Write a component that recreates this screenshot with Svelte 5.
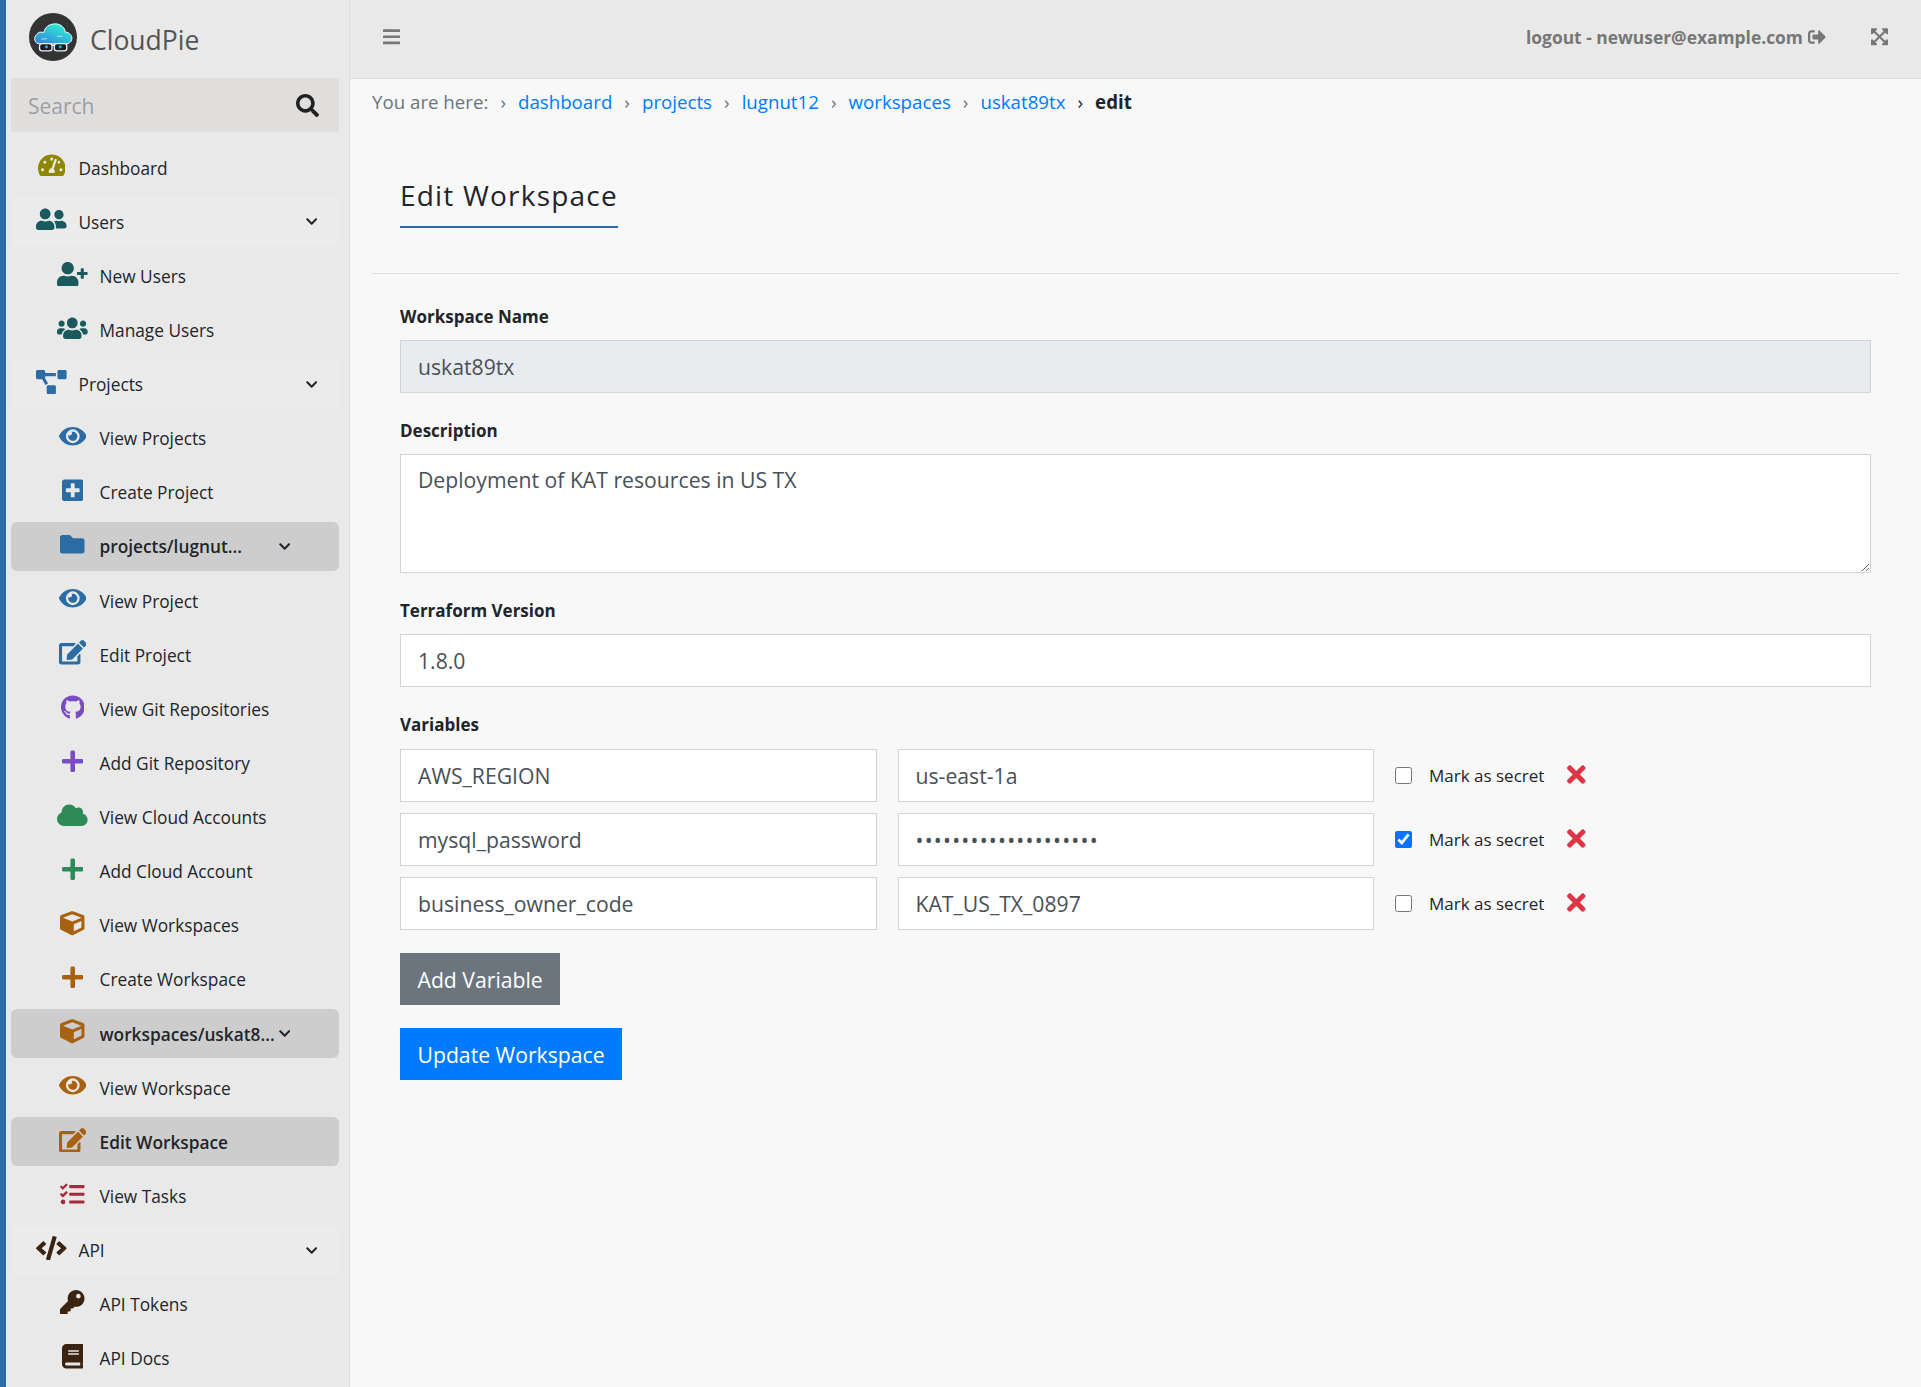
<script>
	const icons = {
		search: [512, 'M505 442.7L405.3 343c-4.5-4.5-10.6-7-17-7H372c27.6-35.3 44-79.7 44-128C416 93.1 322.9 0 208 0S0 93.1 0 208s93.1 208 208 208c48.3 0 92.7-16.4 128-44v16.3c0 6.4 2.5 12.5 7 17l99.7 99.7c9.4 9.4 24.6 9.4 33.9 0l28.3-28.3c9.4-9.4 9.4-24.6.1-34zM208 336c-70.7 0-128-57.2-128-128 0-70.7 57.2-128 128-128 70.7 0 128 57.2 128 128 0 70.7-57.2 128-128 128z'],
		gauge: [576, 'M288 32C128.94 32 0 160.94 0 320c0 52.8 14.25 102.26 39.06 144.8 5.61 9.62 16.3 15.2 27.44 15.2h443c11.14 0 21.83-5.58 27.44-15.2C561.75 422.26 576 372.8 576 320c0-159.06-128.94-288-288-288zm0 64c14.71 0 26.58 10.13 30.32 23.65-1.11 2.26-2.64 4.23-3.45 6.67l-9.22 27.67c-5.13 3.49-10.97 6.01-17.64 6.01-17.67 0-32-14.33-32-32S270.33 96 288 96zM96 384c-17.67 0-32-14.33-32-32s14.33-32 32-32 32 14.33 32 32-14.33 32-32 32zm48-160c-17.67 0-32-14.33-32-32s14.33-32 32-32 32 14.33 32 32-14.33 32-32 32zm246.77-72.41l-61.33 184C343.13 347.33 352 364.54 352 384c0 11.72-3.38 22.55-8.88 32H232.88c-5.5-9.45-8.88-20.28-8.88-32 0-33.94 26.5-61.43 59.9-63.59l61.34-184.01c4.17-12.56 17.73-19.45 30.36-15.17 12.57 4.19 19.35 17.79 15.17 30.36zm14.66 57.2l15.52-46.55c3.47-1.29 7.13-2.23 11.05-2.23 17.67 0 32 14.33 32 32s-14.33 32-32 32c-11.38-.01-20.89-6.28-26.57-15.22zM480 384c-17.67 0-32-14.33-32-32s14.33-32 32-32 32 14.33 32 32-14.33 32-32 32z'],
		friends: [640, 'M192 256c61.9 0 112-50.1 112-112S253.9 32 192 32 80 82.1 80 144s50.1 112 112 112zm76.8 32h-8.3c-20.8 10-43.9 16-68.5 16s-47.6-6-68.5-16h-8.3C51.6 288 0 339.6 0 403.2V432c0 26.5 21.5 48 48 48h288c26.5 0 48-21.5 48-48v-28.8c0-63.6-51.6-115.2-115.2-115.2zM480 256c53 0 96-43 96-96s-43-96-96-96-96 43-96 96 43 96 96 96zm48 32h-3.8c-13.9 4.8-28.6 8-44.2 8s-30.3-3.2-44.2-8H432c-20.4 0-39.2 5.9-55.7 15.4 24.4 26.3 39.7 61.2 39.7 99.8v38.4c0 2.2-.5 4.3-.6 6.4H592c26.5 0 48-21.5 48-48 0-61.9-50.1-112-112-112z'],
		userPlus: [640, 'M624 208h-64v-64c0-8.8-7.2-16-16-16h-32c-8.8 0-16 7.2-16 16v64h-64c-8.8 0-16 7.2-16 16v32c0 8.8 7.2 16 16 16h64v64c0 8.8 7.2 16 16 16h32c8.8 0 16-7.2 16-16v-64h64c8.8 0 16-7.2 16-16v-32c0-8.8-7.2-16-16-16zm-400 48c70.7 0 128-57.3 128-128S294.7 0 224 0 96 57.3 96 128s57.3 128 128 128zm89.6 32h-16.7c-22.2 10.2-46.9 16-72.9 16s-50.6-5.8-72.9-16h-16.7C60.2 288 0 348.2 0 422.4V464c0 26.5 21.5 48 48 48h352c26.5 0 48-21.5 48-48v-41.6c0-74.2-60.2-134.4-134.4-134.4z'],
		users: [640, 'M96 224c35.3 0 64-28.7 64-64s-28.7-64-64-64-64 28.7-64 64 28.7 64 64 64zm448 0c35.3 0 64-28.7 64-64s-28.7-64-64-64-64 28.7-64 64 28.7 64 64 64zm32 32h-64c-17.6 0-33.5 7.1-45.1 18.6 40.3 22.1 68.9 62 75.1 109.4h66c17.7 0 32-14.3 32-32v-32c0-35.3-28.7-64-64-64zm-256 0c61.9 0 112-50.1 112-112S381.9 32 320 32 208 82.1 208 144s50.1 112 112 112zm76.8 32h-8.3c-20.8 10-43.9 16-68.5 16s-47.6-6-68.5-16h-8.3C179.6 288 128 339.6 128 403.2V432c0 26.5 21.5 48 48 48h288c26.5 0 48-21.5 48-48v-28.8c0-63.6-51.6-115.2-115.2-115.2zm-223.7-13.4C161.5 263.1 145.6 256 128 256H64c-35.3 0-64 28.7-64 64v32c0 17.7 14.3 32 32 32h65.9c6.3-47.4 34.9-87.3 75.2-109.4z'],
		diagram: [640, 'M384 320H256c-17.67 0-32 14.33-32 32v128c0 17.67 14.33 32 32 32h128c17.67 0 32-14.33 32-32V352c0-17.67-14.33-32-32-32zM192 32c0-17.67-14.33-32-32-32H32C14.33 0 0 14.33 0 32v128c0 17.67 14.33 32 32 32h95.72l73.16 128.04C211.98 300.98 232.4 288 256 288h.28L192 175.51V128h224V64H192V32zM608 0H480c-17.67 0-32 14.33-32 32v128c0 17.67 14.33 32 32 32h128c17.67 0 32-14.33 32-32V32c0-17.67-14.33-32-32-32z'],
		eye: [576, 'M572.52 241.4C518.29 135.59 410.93 64 288 64S57.68 135.64 3.48 241.41a32.35 32.35 0 0 0 0 29.19C57.71 376.41 165.07 448 288 448s230.32-71.64 284.52-177.41a32.35 32.35 0 0 0 0-29.19zM288 400a144 144 0 1 1 144-144 143.93 143.93 0 0 1-144 144zm0-240a95.31 95.31 0 0 0-25.31 3.79 47.85 47.85 0 0 1-66.9 66.9A95.78 95.78 0 1 0 288 160z'],
		plusSquare: [448, 'M400 32H48C21.5 32 0 53.5 0 80v352c0 26.5 21.5 48 48 48h352c26.5 0 48-21.5 48-48V80c0-26.5-21.5-48-48-48zm-32 252c0 6.6-5.4 12-12 12h-92v92c0 6.6-5.4 12-12 12h-56c-6.6 0-12-5.4-12-12v-92H92c-6.6 0-12-5.4-12-12v-56c0-6.6 5.4-12 12-12h92v-92c0-6.6 5.4-12 12-12h56c6.6 0 12 5.4 12 12v92h92c6.6 0 12 5.4 12 12v56z'],
		folder: [512, 'M464 128H272l-64-64H48C21.49 64 0 85.49 0 112v288c0 26.51 21.49 48 48 48h416c26.51 0 48-21.49 48-48V176c0-26.51-21.49-48-48-48z'],
		edit: [576, 'M402.6 83.2l90.2 90.2c3.8 3.8 3.8 10 0 13.8L274.4 405.6l-92.8 10.3c-12.4 1.4-22.9-9.1-21.5-21.5l10.3-92.8L388.8 83.2c3.8-3.8 10-3.8 13.8 0zm162-22.9l-48.8-48.8c-15.2-15.2-39.9-15.2-55.2 0l-35.4 35.4c-3.8 3.8-3.8 10 0 13.8l90.2 90.2c3.8 3.8 10 3.8 13.8 0l35.4-35.4c15.2-15.3 15.2-40 0-55.2zM384 346.2V448H64V128h229.8c3.2 0 6.2-1.3 8.5-3.5l40-40c7.6-7.6 2.2-20.5-8.5-20.5H48C21.5 64 0 85.5 0 112v352c0 26.5 21.5 48 48 48h352c26.5 0 48-21.5 48-48V306.2c0-10.7-12.9-16-20.5-8.5l-40 40c-2.2 2.3-3.5 5.3-3.5 8.5z'],
		github: [496, 'M165.9 397.4c0 2-2.3 3.6-5.2 3.6-3.3 0-5.6-1.6-5.6-3.6 0-2 2.3-3.6 5.2-3.6 3-.3 5.6 1.3 5.6 3.6zm-31.1-4.5c-.7 2 1.3 4.3 4.3 4.9 2.6 1 5.6 0 6.2-2s-1.3-4.3-4.3-5c-2.6-.7-5.5.3-6.2 2.1zm44.2-1.7c-2.9.7-4.9 2.6-4.6 4.9.3 2 2.9 3.3 5.9 2.6 2.9-.7 4.9-2.6 4.6-4.6-.3-1.9-3-3.2-5.9-2.9zM244.8 8C106.1 8 0 113.3 0 252c0 110.9 69.8 205.8 169.5 239.2 12.8 2.3 17.3-5.6 17.3-12.1 0-6.2-.3-40.4-.3-61.4 0 0-70 15-84.7-29.8 0 0-11.4-29.1-27.8-36.6 0 0-22.9-15.7 1.6-15.4 0 0 24.9 2 38.6 25.8 21.9 38.6 58.6 27.5 72.9 20.9 2.3-16 8.8-27.1 16-33.7-55.9-6.2-112.3-14.3-112.3-110.5 0-27.5 7.6-41.3 23.6-58.9-2.6-6.5-11.1-33.3 2.6-67.9 20.9-6.5 69 27 69 27 20-5.6 41.5-8.5 62.8-8.5s42.8 2.9 62.8 8.5c0 0 48.1-33.6 69-27 13.7 34.7 5.2 61.4 2.6 67.9 16 17.7 25.8 31.5 25.8 58.9 0 96.5-58.9 104.2-114.8 110.5 9.2 7.9 17 22.9 17 46.4 0 33.7-.3 75.4-.3 83.6 0 6.5 4.6 14.4 17.3 12.1C428.2 457.8 496 362.9 496 252 496 113.3 383.5 8 244.8 8z'],
		plus: [448, 'M416 208H272V64c0-17.67-14.33-32-32-32h-32c-17.67 0-32 14.33-32 32v144H32c-17.67 0-32 14.33-32 32v32c0 17.67 14.33 32 32 32h144v144c0 17.67 14.33 32 32 32h32c17.67 0 32-14.33 32-32V304h144c17.67 0 32-14.33 32-32v-32c0-17.67-14.33-32-32-32z'],
		cloud: [640, 'M537.6 226.6c4.1-10.7 6.4-22.4 6.4-34.6 0-53-43-96-96-96-19.7 0-38.1 6-53.3 16.2C367 64.2 315.3 32 256 32c-88.4 0-160 71.6-160 160 0 2.7.1 5.4.2 8.1C40.2 219.8 0 273.2 0 336c0 79.5 64.5 144 144 144h368c70.7 0 128-57.3 128-128 0-61.9-44-113.6-102.4-125.4z'],
		cube: [512, 'M239.1 6.3l-208 78c-18.7 7-31.1 25-31.1 45v225.1c0 18.2 10.3 34.8 26.5 42.9l208 104c13.5 6.8 29.4 6.8 42.9 0l208-104c16.3-8.1 26.5-24.8 26.5-42.9V129.3c0-20-12.4-37.9-31.1-44.9l-208-78C262 2.2 250 2.2 239.1 6.3zM256 68.4l192 72v1.1l-192 78-192-78v-1.1l192-72zm32 356V275.5l160-65v133.9l-160 80z'],
		tasks: [512, 'M139.61 35.5a12 12 0 0 0-17 0L58.93 98.81l-22.7-22.12a12 12 0 0 0-17 0L3.53 92.41a12 12 0 0 0 0 17l47.59 47.4a12.78 12.78 0 0 0 17.61 0l15.59-15.62L156.52 69a12.09 12.09 0 0 0 .09-17zm0 159.19a12 12 0 0 0-17 0l-63.68 63.72-22.7-22.1a12 12 0 0 0-17 0L3.53 252a12 12 0 0 0 0 17L51 316.5a12.77 12.77 0 0 0 17.6 0l15.7-15.69 72.2-72.22a12 12 0 0 0 .09-16.9zM64 368c-26.49 0-48.59 21.5-48.59 48S37.53 464 64 464a48 48 0 0 0 0-96zm432 16H208a16 16 0 0 0-16 16v32a16 16 0 0 0 16 16h288a16 16 0 0 0 16-16v-32a16 16 0 0 0-16-16zm0-320H208a16 16 0 0 0-16 16v32a16 16 0 0 0 16 16h288a16 16 0 0 0 16-16V80a16 16 0 0 0-16-16zm0 160H208a16 16 0 0 0-16 16v32a16 16 0 0 0 16 16h288a16 16 0 0 0 16-16v-32a16 16 0 0 0-16-16z'],
		code: [640, 'M278.9 511.5l-61-17.7c-6.4-1.8-10-8.5-8.2-14.9L346.2 8.7c1.8-6.4 8.5-10.1 14.9-8.2l61 17.7c6.4 1.8 10 8.5 8.2 14.9L293.8 503.3c-1.9 6.4-8.5 10.1-14.9 8.2zm-114-112.2l43.5-46.4c4.6-4.9 4.3-12.7-.8-17.2L117 256l90.6-79.7c5.1-4.5 5.5-12.3.8-17.2l-43.5-46.4c-4.5-4.8-12.1-5.1-17-.5L3.8 247.2c-5.1 4.7-5.1 12.8 0 17.5l144.1 135.1c4.9 4.6 12.5 4.4 17-.5zm327.2.6l144.1-135.1c5.1-4.7 5.1-12.8 0-17.5L492.1 112.1c-4.8-4.5-12.4-4.3-17 .5L431.6 159c-4.6 4.9-4.3 12.7.8 17.2L523 256l-90.6 79.7c-5.1 4.5-5.5 12.3-.8 17.2l43.5 46.4c4.5 4.9 12.1 5.1 17 .6z'],
		key: [512, 'M512 176.001C512 273.203 433.202 352 336 352c-11.22 0-22.19-1.062-32.827-3.069l-24.012 27.014A23.999 23.999 0 0 1 261.223 384H224v40c0 13.255-10.745 24-24 24h-40v40c0 13.255-10.745 24-24 24H24c-13.255 0-24-10.745-24-24v-78.059c0-6.365 2.529-12.47 7.029-16.971l161.802-161.802C163.108 213.814 160 195.271 160 176 160 78.798 238.797.001 335.999 0 433.488-.001 512 78.511 512 176.001zM336 128c0 26.51 21.49 48 48 48s48-21.49 48-48-21.49-48-48-48-48 21.49-48 48z'],
		book: [448, 'M448 360V24c0-13.3-10.7-24-24-24H96C43 0 0 43 0 96v320c0 53 43 96 96 96h328c13.3 0 24-10.7 24-24v-16c0-7.5-3.5-14.3-8.9-18.7-4.2-15.4-4.2-59.3 0-74.7 5.4-4.3 8.9-11.1 8.9-18.6zM128 134c0-3.3 2.7-6 6-6h212c3.3 0 6 2.7 6 6v20c0 3.3-2.7 6-6 6H134c-3.3 0-6-2.7-6-6v-20zm0 64c0-3.3 2.7-6 6-6h212c3.3 0 6 2.7 6 6v20c0 3.3-2.7 6-6 6H134c-3.3 0-6-2.7-6-6v-20zm253.4 250H96c-17.7 0-32-14.3-32-32 0-17.6 14.4-32 32-32h285.4c-1.9 17.1-1.9 46.9 0 64z'],
		chevron: [448, 'M207.029 381.476L12.686 187.132c-9.373-9.373-9.373-24.569 0-33.941l22.667-22.667c9.357-9.357 24.522-9.375 33.901-.04L224 284.505l154.745-154.021c9.379-9.335 24.544-9.317 33.901.04l22.667 22.667c9.373 9.373 9.373 24.569 0 33.941L240.971 381.476c-9.373 9.372-24.569 9.372-33.942 0z'],
		bars: [448, 'M16 132h416c8.837 0 16-7.163 16-16V76c0-8.837-7.163-16-16-16H16C7.163 60 0 67.163 0 76v40c0 8.837 7.163 16 16 16zm0 160h416c8.837 0 16-7.163 16-16v-40c0-8.837-7.163-16-16-16H16c-8.837 0-16 7.163-16 16v40c0 8.837 7.163 16 16 16zm0 160h416c8.837 0 16-7.163 16-16v-40c0-8.837-7.163-16-16-16H16c-8.837 0-16 7.163-16 16v40c0 8.837 7.163 16 16 16z'],
		signOut: [512, 'M497 273L329 441c-15 15-41 4.5-41-17v-96H152c-13.3 0-24-10.7-24-24v-96c0-13.3 10.7-24 24-24h136V88c0-21.4 25.9-32 41-17l168 168c9.3 9.4 9.3 24.6 0 34zM192 436v-40c0-6.6-5.4-12-12-12H96c-17.7 0-32-14.3-32-32V160c0-17.7 14.3-32 32-32h84c6.6 0 12-5.4 12-12V76c0-6.6-5.4-12-12-12H96c-53 0-96 43-96 96v192c0 53 43 96 96 96h84c6.6 0 12-5.4 12-12z'],
		expand: [448, 'M448 344v112a23.94 23.94 0 0 1-24 24H312c-21.39 0-32.09-25.9-17-41l36.2-36.2L224 295.6 116.77 402.9 153 439c15.09 15.1 4.39 41-17 41H24a23.94 23.94 0 0 1-24-24V344c0-21.4 25.89-32.1 41-17l36.19 36.2L184.46 256 77.18 148.7 41 185c-15.1 15.1-41 4.4-41-17V56a23.94 23.94 0 0 1 24-24h112c21.39 0 32.09 25.9 17 41l-36.2 36.2L224 216.4l107.23-107.3L295 73c-15.09-15.1-4.39-41 17-41h112a23.94 23.94 0 0 1 24 24v112c0 21.4-25.89 32.1-41 17l-36.19-36.2L263.54 256l107.28 107.3L407 327.1c15.1-15.2 41-4.5 41 16.9z'],
		times: [352, 'M242.72 256l100.07-100.07c12.28-12.28 12.28-32.19 0-44.48l-22.24-22.24c-12.28-12.28-32.19-12.28-44.48 0L176 189.28 75.93 89.21c-12.28-12.28-32.19-12.28-44.48 0L9.21 111.45c-12.28 12.28-12.28 32.19 0 44.48L109.28 256 9.21 356.07c-12.28 12.28-12.28 32.19 0 44.48l22.24 22.24c12.28 12.28 32.2 12.28 44.48 0L176 322.72l100.07 100.07c12.28 12.28 32.2 12.28 44.48 0l22.24-22.24c12.28-12.28 12.28-32.19 0-44.48L242.72 256z']
	}

	const nav = [
		{ label: 'Dashboard', icon: 'gauge', tint: 'olive' },
		{ label: 'Users', icon: 'friends', tint: 'teal', group: true },
		{ label: 'New Users', icon: 'userPlus', tint: 'teal', sub: true },
		{ label: 'Manage Users', icon: 'users', tint: 'teal', sub: true },
		{ label: 'Projects', icon: 'diagram', tint: 'blue', group: true },
		{ label: 'View Projects', icon: 'eye', tint: 'blue', sub: true },
		{ label: 'Create Project', icon: 'plusSquare', tint: 'blue', sub: true },
		{ label: 'projects/lugnut...', icon: 'folder', tint: 'blue', sub: true, active: true, open: true },
		{ label: 'View Project', icon: 'eye', tint: 'blue', sub: true },
		{ label: 'Edit Project', icon: 'edit', tint: 'blue', sub: true },
		{ label: 'View Git Repositories', icon: 'github', tint: 'purple', sub: true },
		{ label: 'Add Git Repository', icon: 'plus', tint: 'purple', sub: true },
		{ label: 'View Cloud Accounts', icon: 'cloud', tint: 'green', sub: true },
		{ label: 'Add Cloud Account', icon: 'plus', tint: 'green', sub: true },
		{ label: 'View Workspaces', icon: 'cube', tint: 'brown', sub: true },
		{ label: 'Create Workspace', icon: 'plus', tint: 'brown', sub: true },
		{ label: 'workspaces/uskat8...', icon: 'cube', tint: 'brown', sub: true, active: true, open: true },
		{ label: 'View Workspace', icon: 'eye', tint: 'brown', sub: true },
		{ label: 'Edit Workspace', icon: 'edit', tint: 'brown', sub: true, active: true },
		{ label: 'View Tasks', icon: 'tasks', tint: 'red', sub: true },
		{ label: 'API', icon: 'code', tint: 'dark', group: true },
		{ label: 'API Tokens', icon: 'key', tint: 'dark', sub: true },
		{ label: 'API Docs', icon: 'book', tint: 'dark', sub: true }
	]

	const crumbs = ['dashboard', 'projects', 'lugnut12', 'workspaces', 'uskat89tx']

	const variables = [
		{ name: 'AWS_REGION', value: 'us-east-1a', secret: false },
		{ name: 'mysql_password', value: 'aaaaaaaaaaaaaaaaaaaa', secret: true },
		{ name: 'business_owner_code', value: 'KAT_US_TX_0897', secret: false }
	]
</script>

{#snippet icon(name, size)}
	<svg class="ico" viewBox="0 0 {icons[name][0]} 512" height={size} aria-hidden="true">
		<path d={icons[name][1]} />
	</svg>
{/snippet}

<div class="layout">
	<aside class="sidebar">
		<div class="brand">
			<svg class="logo" viewBox="15 12 146 146" width="48" height="48" aria-hidden="true">
				<defs>
					<linearGradient id="sky" x1="0.15" y1="0.9" x2="0.75" y2="0.1">
						<stop offset="0" stop-color="#2f8fdc" />
						<stop offset="1" stop-color="#2fe9d2" />
					</linearGradient>
				</defs>
				<circle cx="88" cy="85" r="73" fill="#333" />
				<path d="M48 106C32 106 27 86 38 78 43 70 52 68 60 72 62 55 78 45 95 45 112 45 125 58 125 70 138 70 148 82 145 92 143 102 135 106 128 106Z" fill="url(#sky)" stroke="#f4fbff" stroke-width="3" />
				<path d="M52 92q6-4 10 0q4-4 8-2M100 84q5-4 9 0q4-3 8-1" fill="none" stroke="#fff" stroke-width="2" />
				<rect x="47" y="105" width="38" height="22" rx="8" fill="#1c1c1c" stroke="#eef" stroke-width="4" />
				<rect x="92" y="105" width="38" height="22" rx="8" fill="#1c1c1c" stroke="#eef" stroke-width="4" />
				<path d="M85 110h7" stroke="#eef" stroke-width="4" />
				<circle cx="68" cy="115" r="5" fill="#2a9fd4" />
				<circle cx="110" cy="115" r="5" fill="#2a9fd4" />
			</svg>
			<span class="name">CloudPie</span>
		</div>
		<div class="search">
			<span>Search</span>
			{@render icon('search', 23)}
		</div>
		<nav>
			{#each nav as item}
				<div class="item {item.tint}" class:group={item.group} class:sub={item.sub} class:active={item.active} class:open={item.open}>
					<span class="slot">{@render icon(item.icon, 24.5)}</span>
					<span class="text">{item.label}</span>
					{#if item.group || item.open}
						<span class="chev">{@render icon('chevron', 13)}</span>
					{/if}
				</div>
			{/each}
		</nav>
	</aside>

	<div class="page">
		<header class="topbar">
			<span class="bars">{@render icon('bars', 19.5)}</span>
			<span class="logout">logout - newuser@example.com{@render icon('signOut', 18)}</span>
			<span class="expand">{@render icon('expand', 19.5)}</span>
		</header>

		<main>
			<div class="crumbs">
				<span class="here">You are here:</span>
				{#each crumbs as crumb}
					<span class="sep">›</span>
					<a href="#top">{crumb}</a>
				{/each}
				<span class="sep dark">›</span>
				<b>edit</b>
			</div>

			<div class="heading">
				<h2>Edit Workspace</h2>
			</div>
			<hr />

			<form>
				<label for="name">Workspace Name</label>
				<input id="name" type="text" value="uskat89tx" disabled />

				<label for="desc">Description</label>
				<textarea id="desc">Deployment of KAT resources in US TX</textarea>

				<label for="tf">Terraform Version</label>
				<input id="tf" type="text" value="1.8.0" />

				<label class="vars" for="v0">Variables</label>
				{#each variables as v, i}
					<div class="var">
						<input id="v{i}" type="text" value={v.name} />
						<input type={v.secret ? 'password' : 'text'} value={v.value} />
						<input class="check" type="checkbox" checked={v.secret} />
						<span class="secret">Mark as secret</span>
						<span class="remove">{@render icon('times', 27)}</span>
					</div>
				{/each}

				<button type="button" class="add">Add Variable</button>
				<button type="button" class="save">Update Workspace</button>
			</form>
		</main>
	</div>
</div>

<style>
	:global(body) {
		margin: 0;
		background: #f8f8f8;
	}

	.layout {
		display: flex;
		height: 1387px;
		overflow: hidden;
		font-family: "Open Sans", "Noto Sans", sans-serif;
		color: #212529;
	}

	.ico {
		display: block;
		fill: currentColor;
	}

	.sidebar {
		flex: 0 0 350px;
		box-sizing: border-box;
		padding: 0 10px 0 5px;
		background: #e9e9e9;
		border-left: 6px solid #2a6ca3;
		border-right: 1px solid #ddd;
	}

	.brand {
		display: flex;
		align-items: center;
		gap: 13px;
		height: 78px;
		padding: 0 0 4px 18px;
		box-sizing: border-box;
		font-size: 26.5px;
		color: #555;
	}

	.name {
		padding-top: 5px;
	}

	.search {
		display: flex;
		align-items: center;
		justify-content: space-between;
		height: 54px;
		padding: 0 20px 0 17px;
		background: #e0dfde;
		font-size: 21px;
		color: #9aa0a6;
	}

	.search span {
		padding-top: 2px;
	}

	.search .ico {
		color: #212121;
	}

	nav {
		margin-top: 11px;
	}

	.item {
		display: flex;
		align-items: center;
		height: 49px;
		margin-bottom: 5.13px;
		padding: 0 22px 0 25px;
		font-size: 17.3px;
		border-radius: 6px;
	}

	.item.sub {
		padding-left: 46px;
	}

	.item.group {
		background: #ebebeb;
	}

	.item.active {
		background: #cdcdcd;
		font-weight: 600;
	}

	.item.open {
		padding-right: 49px;
	}

	.slot {
		flex: 0 0 31px;
		display: flex;
		justify-content: center;
		margin: -4px 11.5px 0 0;
	}

	.text {
		padding-top: 1px;
		white-space: nowrap;
		color: #212529;
	}

	.chev {
		margin-left: auto;
		color: #212529;
	}

	.olive .slot { color: #8f8700; }
	.teal .slot { color: #1a5a5e; }
	.blue .slot { color: #2a6ca3; }
	.purple .slot { color: #7a4bc4; }
	.green .slot { color: #2e8b57; }
	.brown .slot { color: #a8610f; }
	.red .slot { color: #a52a3a; }
	.dark .slot { color: #3a2311; }

	.page {
		flex: 1;
		min-width: 0;
	}

	.topbar {
		display: flex;
		align-items: center;
		box-sizing: border-box;
		height: 79px;
		padding: 0 33px 4px;
		background: #e9e9e9;
		border-bottom: 1px solid #ddd;
		color: #777;
	}

	.logout {
		display: flex;
		align-items: center;
		gap: 5px;
		margin-left: auto;
		font-size: 17.4px;
		font-weight: 700;
	}

	.expand {
		margin-left: 45px;
	}

	main {
		padding: 0 22px;
	}

	.crumbs {
		display: flex;
		align-items: center;
		height: 27px;
		margin-top: 9px;
		font-size: 18.7px;
		color: #6c757d;
	}

	.sep {
		margin: 0 12px;
	}

	.sep.dark {
		color: #212529;
	}

	.crumbs a {
		color: #007bff;
		text-decoration: none;
	}

	.crumbs b {
		color: #212529;
	}

	.heading {
		padding: 60px 0 0 28px;
	}

	h2 {
		display: inline-block;
		margin: 0;
		padding-bottom: 11px;
		font-size: 28px;
		font-weight: 400;
		line-height: 40px;
		letter-spacing: 1.2px;
		border-bottom: 2px solid #2a6ca3;
	}

	hr {
		margin: 45px 0 0;
		border: 0;
		border-top: 1px solid #ddd;
	}

	form {
		padding: 29px 28px 0;
	}

	label {
		display: block;
		margin-bottom: 10px;
		font-size: 17px;
		font-weight: 700;
		line-height: 27px;
	}

	label.vars {
		margin-bottom: 11px;
	}

	input[type="text"],
	input[type="password"],
	textarea {
		display: block;
		box-sizing: border-box;
		width: 100%;
		height: 53px;
		margin: 0 0 24px;
		padding: 0 17px;
		border: 1px solid #ced4da;
		border-radius: 0;
		background: #fff;
		font: 21.2px "Open Sans", "Noto Sans", sans-serif;
		color: #495057;
	}

	input[type="password"] {
		letter-spacing: 1.2px;
	}

	input:disabled {
		background: #e9ecef;
	}

	textarea {
		height: 119px;
		padding-top: 10px;
		line-height: 30px;
	}

	.var {
		display: flex;
		align-items: center;
		margin-bottom: 11px;
	}

	.var input[type="text"],
	.var input[type="password"] {
		flex: 0 0 476.5px;
		width: 476.5px;
		margin: 0 21px 0 0;
	}

	.check {
		flex: none;
		width: 17px;
		height: 17px;
		margin: 0 17px 0 0;
	}

	.secret {
		width: 138px;
		font-size: 17px;
		white-space: nowrap;
	}

	.remove {
		margin-top: -2px;
		color: #dc3545;
	}

	button {
		display: block;
		height: 52px;
		padding: 0 17.5px;
		border: 0;
		border-radius: 0;
		color: #fff;
		font: 21.2px "Open Sans", "Noto Sans", sans-serif;
	}

	.add {
		margin: 23px 0;
		background: #6c757d;
	}

	.save {
		background: #007bff;
	}
</style>
